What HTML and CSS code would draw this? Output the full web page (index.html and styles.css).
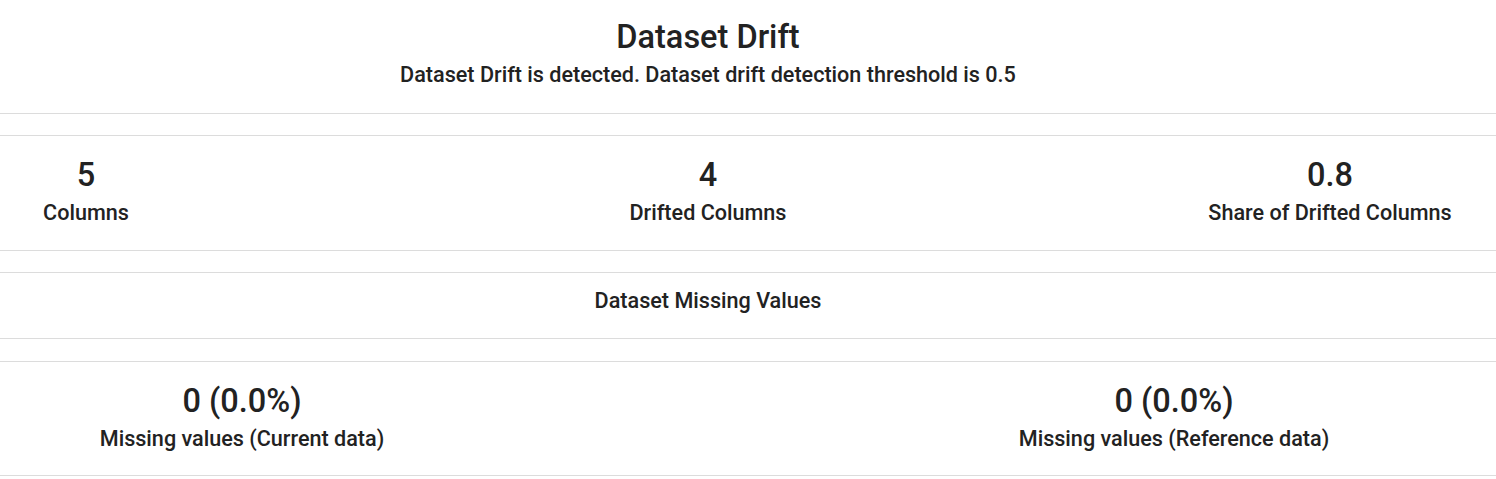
FILE: index.html
```html
<!DOCTYPE html>
<html>
<head>
<meta charset="utf-8">
<link rel="stylesheet" href="styles.css">
</head>
<body>
<section class="card card-head">
  <div class="inner">
    <h1 class="title">Dataset Drift</h1>
    <p class="subtitle">Dataset Drift is detected. Dataset drift detection threshold is 0.5</p>
  </div>
</section>
<section class="card card-counters">
  <div class="inner counters counters-3">
    <div class="counter"><div class="value">5</div><div class="label">Columns</div></div>
    <div class="counter"><div class="value">4</div><div class="label">Drifted Columns</div></div>
    <div class="counter"><div class="value">0.8</div><div class="label">Share of Drifted Columns</div></div>
  </div>
</section>
<section class="card card-section">
  <div class="inner">
    <div class="section-title">Dataset Missing Values</div>
  </div>
</section>
<section class="card card-counters card-last">
  <div class="inner counters counters-2">
    <div class="counter"><div class="value">0 (0.0%)</div><div class="label">Missing values (Current data)</div></div>
    <div class="counter"><div class="value">0 (0.0%)</div><div class="label">Missing values (Reference data)</div></div>
  </div>
</section>
</body>
</html>
```
FILE: styles.css
```css
html, body {
  margin: 0;
  padding: 0;
  background: #ffffff;
}
body {
  font-family: Roboto, "Liberation Sans", sans-serif;
  color: #222222;
  font-weight: 500;
}
.card {
  border-bottom: 1px solid #dcdcdc;
  border-top: 1px solid #dcdcdc;
  margin-bottom: 21px;
}
.card-head {
  border-top: none;
}
.card-section {
  margin-bottom: 22px;
}
.inner {
  width: 1416px;
}
.title {
  margin: 0;
  padding-top: 17px;
  font-size: 32.5px;
  line-height: 40px;
  font-weight: 500;
  text-align: center;
}
.subtitle {
  margin: 4px 0 0;
  font-size: 21.6px;
  line-height: 28px;
  font-weight: 500;
  text-align: center;
  padding-bottom: 24px;
}
.counters {
  display: flex;
  justify-content: space-between;
  padding: 19px 0 23px;
}
.card-last .counters {
  padding-bottom: 22px;
}
.counter {
  display: flex;
  flex-direction: column;
  align-items: center;
  white-space: nowrap;
}
.counters-3 .counter { width: 172px; }
.counters-2 .counter { width: 484px; }
.value {
  font-size: 32.5px;
  line-height: 40px;
  font-weight: 500;
}
.label {
  margin-top: 4px;
  font-size: 21.6px;
  line-height: 28px;
  font-weight: 500;
}
.card-section .section-title {
  text-align: center;
  font-size: 21.6px;
  line-height: 28px;
  padding: 14px 0 23px;
}
```
